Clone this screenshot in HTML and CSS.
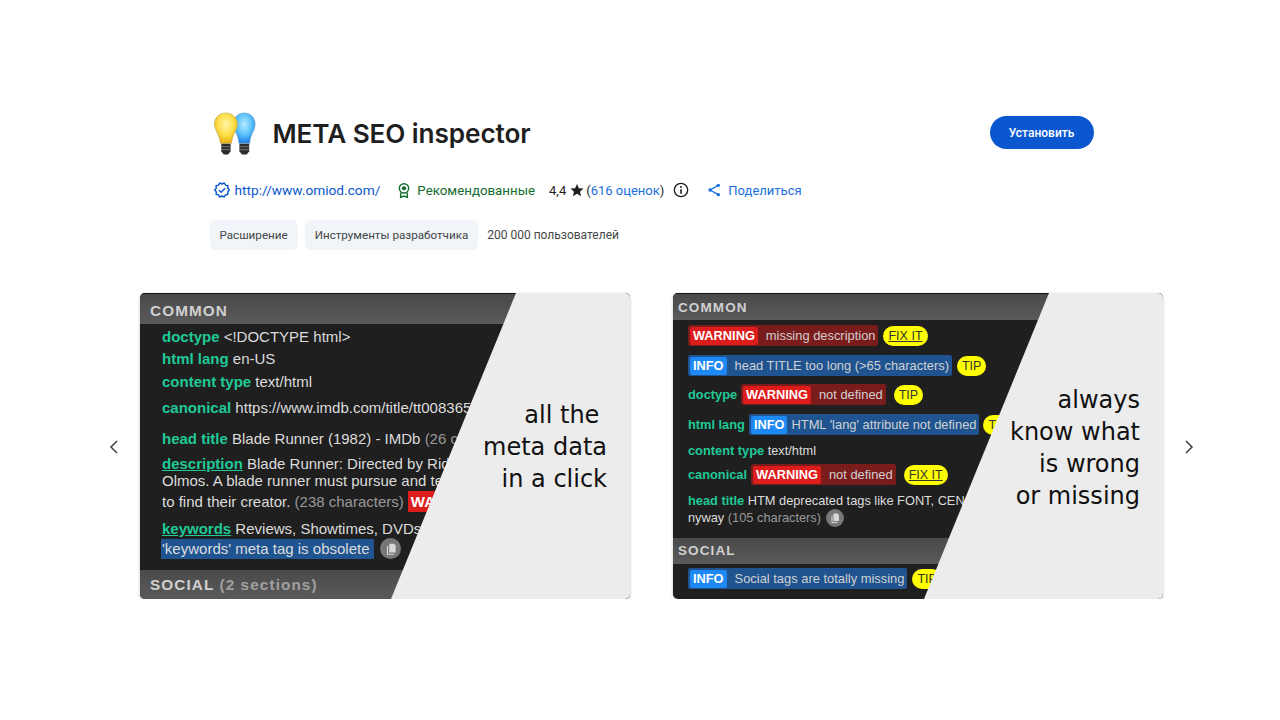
FILE: index.html
```html
<!DOCTYPE html>
<html>
<head>
    <title>META SEO inspector</title>
    <link rel="stylesheet" href="styles.css">
</head>
<body>
    <svg class="defs" width="0" height="0" aria-hidden="true">
        <symbol id="copy-icon" viewBox="0 0 24 24">
            <path d="M9 3h8l3 3v12H9z" fill="#d8d8d8"/>
            <path d="M5 7h2v13h10v2H5z" fill="#d8d8d8"/>
        </symbol>
    </svg>

    <main class="page">
        <header class="top">
            <div class="title-row">
                <div class="brand">
                    <svg class="logo" viewBox="0 0 48 48" width="47" height="47">
                        <defs>
                            <radialGradient id="bulb-yellow" cx="50%" cy="38%" r="62%">
                                <stop offset="0" stop-color="#fff4a8"/>
                                <stop offset="0.55" stop-color="#ffdf4a"/>
                                <stop offset="1" stop-color="#e8b010"/>
                            </radialGradient>
                            <radialGradient id="bulb-blue" cx="50%" cy="38%" r="62%">
                                <stop offset="0" stop-color="#b4ecff"/>
                                <stop offset="0.55" stop-color="#5cc4fb"/>
                                <stop offset="1" stop-color="#1f7fe8"/>
                            </radialGradient>
                        </defs>
                        <path d="M33 2c-6 0-11 4.500-11 11 0 7 5 11 5.500 20h11c.5-9 5.500-13 5.500-20 0-6.500-5-11-11-11z" fill="url(#bulb-blue)" stroke="#6b9db8" stroke-width=".6"/>
                        <path d="M14 2C7.500 2 2.500 7 2.500 13c0 7 5.500 11 6 20h11.500c.5-9 6-13 6-20C26 7 20.500 2 14 2z" fill="url(#bulb-yellow)" stroke="#b5a35a" stroke-width=".6"/>
                        <path d="M9.500 33.500h9.500v7.500l-2.500 3.500h-4.500l-2.500-3.500z" fill="#2b2b2b"/>
                        <path d="M28 33.500h10v7.500l-2.500 3.500h-5l-2.500-3.500z" fill="#2b2b2b"/>
                        <path d="M9.500 36.500h9.500M9.500 39.500h9.500M28 36.500h10M28 39.500h10" stroke="#8a8a8a" stroke-width=".8"/>
                    </svg>
                    <h1>META SEO inspector</h1>
                </div>
                <button class="install">Установить</button>
            </div>

            <div class="meta-row">
                <svg class="icon" viewBox="0 0 24 24" width="16" height="16">
                    <path d="M23 12l-2.440-2.790.340-3.690-3.610-.820-1.890-3.200L12 2.960 8.600 1.500 6.710 4.690 3.100 5.500l.340 3.700L1 12l2.440 2.790-.340 3.700 3.610.820L8.600 22.500l3.400-1.470 3.400 1.460 1.890-3.190 3.610-.820-.340-3.690z" fill="none" stroke="#0b57d0" stroke-width="2.200" stroke-linejoin="round"/>
                    <path d="M7.500 12.300l3.200 3.200 5.900-6" fill="none" stroke="#0b57d0" stroke-width="2.200"/>
                </svg>
                <a class="site-link">http://www.omiod.com/</a>
                <svg class="icon award" viewBox="0 0 24 24" width="16" height="16">
                    <circle cx="12" cy="9.500" r="7" fill="none" stroke="#146c2e" stroke-width="2.200"/>
                    <circle cx="12" cy="9.500" r="3.200" fill="#146c2e"/>
                    <path d="M7 16v7l5-2 5 2v-7" fill="none" stroke="#146c2e" stroke-width="2.200"/>
                </svg>
                <span class="featured">Рекомендованные</span>
                <span class="rating">4,4<svg class="star" viewBox="0 0 24 24" width="14" height="14"><path d="M12 1.500l3.200 7.400 8 .7-6 5.300 1.800 7.900L12 18.600l-7 4.200 1.800-7.900-6-5.300 8-.7z" fill="#1f1f1f"/></svg>(<a class="rating-link">616 оценок</a>)</span>
                <svg class="icon info-icon" viewBox="0 0 24 24" width="16" height="16">
                    <circle cx="12" cy="12" r="10" fill="none" stroke="#1f1f1f" stroke-width="2"/>
                    <path d="M12 11v6.500" stroke="#1f1f1f" stroke-width="2.400"/>
                    <circle cx="12" cy="7.500" r="1.500" fill="#1f1f1f"/>
                </svg>
                <svg class="icon share-icon" viewBox="0 0 24 24" width="16" height="16">
                    <path d="M18.500 5L6 12l12.500 7" fill="none" stroke="#1a6fe0" stroke-width="2"/>
                    <circle cx="18.500" cy="5" r="2.500" fill="#1a6fe0"/>
                    <circle cx="6" cy="12" r="2.500" fill="#1a6fe0"/>
                    <circle cx="18.500" cy="19" r="2.500" fill="#1a6fe0"/>
                </svg>
                <a class="share-link">Поделиться</a>
            </div>

            <div class="chips">
                <span class="chip">Расширение</span>
                <span class="chip">Инструменты разработчика</span>
                <span class="users">200 000 пользователей</span>
            </div>
        </header>

        <section class="gallery">
            <svg class="chevron" viewBox="0 0 10 16" width="10" height="16"><path d="M8 2L2 8l6 6" fill="none" stroke="#3c4043" stroke-width="1.500"/></svg>

            <div class="shots">
                <div class="card card-big">
                    <div class="band">COMMON</div>
                    <div class="rows">
                        <div class="row mt-4"><b>doctype</b> &lt;!DOCTYPE html&gt;</div>
                        <div class="row mt-5"><b>html lang</b> en-US</div>
                        <div class="row mt-6"><b>content type</b> text/html</div>
                        <div class="row mt-9"><b>canonical</b> https://www.imdb.com/title/tt0083658/</div>
                        <div class="row mt-14"><b>head title</b> Blade Runner (1982) - IMDb <i>(26 ch</i></div>
                        <div class="row mt-8"><b class="under">description</b> Blade Runner: Directed by Ridley</div>
                        <div class="row">Olmos. A blade runner must pursue and term</div>
                        <div class="row mt-4">to find their creator. <i>(238 characters)</i><em class="warn-tag">WARNING</em></div>
                        <div class="row mt-10"><b class="under">keywords</b> Reviews, Showtimes, DVDs, Ph</div>
                        <div class="row mt-3">
                            <span class="obsolete">'keywords' meta tag is obsolete</span>
                            <span class="copy"><svg width="14" height="14"><use href="#copy-icon"/></svg></span>
                        </div>
                    </div>
                    <div class="band band-social">SOCIAL <i>(2 sections)</i></div>
                    <div class="wedge">
                        <p class="slogan">all the&nbsp;<br>meta data<br>in a click</p>
                    </div>
                </div>

                <div class="card card-small">
                    <div class="band">COMMON</div>
                    <div class="rows">
                        <div class="row mt-7"><span class="pill warn"><em>WARNING</em>missing description</span><span class="tip fix">FIX IT</span></div>
                        <div class="row mt-13"><span class="pill note"><em>INFO</em>head TITLE too long (&gt;65 characters)</span><span class="tip">TIP</span></div>
                        <div class="row mt-12"><b>doctype</b><span class="pill warn"><em>WARNING</em>not defined</span><span class="tip">TIP</span></div>
                        <div class="row mt-13"><b>html lang</b><span class="pill note tight"><em>INFO</em>HTML 'lang' attribute not defined</span><span class="tip">TIP</span></div>
                        <div class="row mt-9"><b>content type</b> text/html</div>
                        <div class="row mt-7"><b>canonical</b><span class="pill warn"><em>WARNING</em>not defined</span><span class="tip fix">FIX IT</span></div>
                        <div class="row mt-9"><b>head title</b> HTM deprecated tags like FONT, CEN</div>
                        <div class="row">nyway <i>(105 characters)</i><span class="copy"><svg width="12" height="12"><use href="#copy-icon"/></svg></span></div>
                    </div>
                    <div class="band band-social">SOCIAL</div>
                    <div class="rows">
                        <div class="row mt-6"><span class="pill note"><em>INFO</em>Social tags are totally missing</span><span class="tip">TIP</span></div>
                    </div>
                    <div class="wedge">
                        <p class="slogan">always<br>know what<br>is wrong<br>or missing</p>
                    </div>
                </div>
            </div>

            <svg class="chevron" viewBox="0 0 10 16" width="10" height="16"><path d="M2 2l6 6-6 6" fill="none" stroke="#3c4043" stroke-width="1.500"/></svg>
        </section>
    </main>
</body>
</html>
```

FILE: styles.css
```css
body {
    margin: 0;
    background-color: #fff;
    color: #1f1f1f;
    font-family: Roboto, Arial, sans-serif;
}

.defs {
    position: absolute;
}

.page {
    display: flex;
    flex-direction: column;
    align-items: center;
    padding: 108px 0 0 23px;
}

/* header block */
.top {
    width: 884px;
}

.title-row {
    display: flex;
    justify-content: space-between;
    align-items: center;
    height: 48px;
}

.brand {
    display: flex;
    align-items: center;
    gap: 14px;
}

.logo {
    margin: 5px 0 0 2px;
}

h1 {
    margin: 2px 0 0;
    font-family: Inter, Roboto, sans-serif;
    font-size: 26.200px;
    font-weight: 600;
    letter-spacing: -0.1px;
}

.install {
    width: 104px;
    height: 33px;
    margin-top: 1px;
    border: 0;
    border-radius: 17px;
    background-color: #0b57d0;
    color: #fff;
    font-family: Roboto, Arial, sans-serif;
    font-size: 12px;
    font-weight: 500;
}

.meta-row {
    display: flex;
    align-items: center;
    height: 24px;
    margin-top: 22px;
    padding-left: 4px;
    font-size: 13px;
}

.site-link {
    margin-left: 5px;
    color: #0b57d0;
    font-size: 13.700px;
}

.award {
    margin-left: 16px;
}

.featured {
    margin-left: 5px;
    color: #146c2e;
    font-size: 13.300px;
}

.rating {
    display: flex;
    align-items: center;
    margin-left: 14px;
}

.star {
    margin: 0 2px 0 4px;
}

.rating-link {
    color: #1a6fe0;
}

.info-icon {
    margin-left: 9px;
}

.share-icon {
    margin-left: 17px;
}

.share-link {
    margin-left: 6px;
    color: #1a6fe0;
}

.chips {
    display: flex;
    align-items: center;
    margin-top: 18px;
}

.chip {
    height: 30px;
    margin-right: 7px;
    padding: 0 10px;
    border-radius: 6px;
    background-color: #f1f4f9;
    color: #444746;
    font-size: 11.650px;
    line-height: 30px;
}

.users {
    margin-left: 2px;
    color: #444746;
    font-size: 12px;
}

/* screenshots */
.gallery {
    display: flex;
    align-items: center;
    gap: 21px;
    margin-top: 43px;
}

.chevron {
    margin-top: 1px;
}

.shots {
    display: flex;
    gap: 43px;
}

.card {
    position: relative;
    width: 490px;
    height: 306px;
    overflow: hidden;
    border-radius: 5px;
    background-color: #1f1f1f;
    box-shadow: 0 1px 3px rgba(60, 64, 67, 0.3);
    color: #dcdcdc;
    font-family: "Liberation Sans", Arial, sans-serif;
}

.band {
    border-top: 1px solid #111;
    background: linear-gradient(#4a4a4a, #5a5a5a);
    color: #d0d0d0;
    font-weight: bold;
    letter-spacing: 1.100px;
}

.band i {
    color: #a0a0a0;
    font-style: normal;
}

.rows {
    display: flex;
    flex-direction: column;
}

.row {
    display: flex;
    align-items: center;
    height: 17px;
    white-space: pre;
}

.row b {
    color: #20c997;
}

.row i {
    color: #9a9a9a;
    font-style: normal;
}

.row em {
    font-style: normal;
}

.mt-3 { margin-top: 3px; }
.mt-4 { margin-top: 4px; }
.mt-5 { margin-top: 5px; }
.mt-6 { margin-top: 6px; }
.mt-7 { margin-top: 7px; }
.mt-8 { margin-top: 8px; }
.mt-9 { margin-top: 9px; }
.mt-10 { margin-top: 10px; }
.mt-12 { margin-top: 12px; }
.mt-13 { margin-top: 13px; }
.mt-14 { margin-top: 14px; }

.copy {
    display: flex;
    justify-content: center;
    align-items: center;
    border-radius: 50%;
    background-color: #777;
}

/* the big one on the left */
.card-big {
    font-size: 15px;
}

.card-big .band {
    height: 30px;
    padding-left: 10px;
    font-size: 15.300px;
    line-height: 33px;
}

.card-big .rows {
    height: 246px;
    padding-left: 22px;
}

.card-big .band-social {
    height: 29px;
    border-top: 0;
    line-height: 30px;
}

.under {
    text-decoration: underline;
}

.warn-tag {
    margin-left: 4px;
    padding: 2px 3px;
    background-color: #dd1c1c;
    color: #fff;
    font-weight: bold;
}

.obsolete {
    width: 212px;
    margin-left: -1px;
    padding: 1px 0 2px 1px;
    background-color: #1f5490;
}

.card-big .copy {
    width: 21px;
    height: 21px;
    margin-left: 6px;
}

/* the one with badges */
.card-small {
    font-size: 12.800px;
}

.card-small .band {
    height: 26px;
    padding-left: 5px;
    font-size: 13.500px;
    line-height: 28px;
}

.card-small .rows {
    padding-left: 15px;
}

.card-small .rows:nth-of-type(2) {
    height: 218px;
}

.card-small .band-social {
    border-top: 0;
    line-height: 26px;
}

.card-small .copy {
    width: 18px;
    height: 18px;
    margin-left: 5px;
}

.pill {
    display: flex;
    align-items: center;
    gap: 8px;
    height: 21px;
    padding: 0 3px 0 2px;
    border-radius: 2px;
    color: #d0d0d0;
    font-size: 12.900px;
}

.pill em {
    display: block;
    height: 18px;
    padding: 0 3px;
    border-radius: 2px;
    color: #fff;
    font-size: 12.800px;
    font-weight: bold;
    line-height: 18px;
}

.warn {
    background-color: #7b1c1c;
}

.warn em {
    background-color: #dd1c1c;
}

.note {
    background-color: #1f5490;
}

.note em {
    background-color: #1e88f5;
}

.row b + .pill {
    margin-left: 4px;
}

.tight {
    gap: 4px;
}

.tip {
    margin-left: 5px;
    height: 20px;
    padding: 0 5px;
    border-radius: 10px;
    background-color: #ffff00;
    color: #333;
    font-size: 12.500px;
    line-height: 20px;
}

.row b + .pill + .tip {
    margin-left: 8px;
}

.row b + .tight + .tip {
    margin-left: 4px;
}

.fix {
    text-decoration: underline;
}

/* grey diagonal with the big text */
.wedge {
    position: absolute;
    inset: 0;
    background-color: #ececec;
    clip-path: polygon(376px 0, 490px 0, 490px 306px, 251px 306px);
}

.slogan {
    margin: 0;
    padding-right: 23px;
    color: #111;
    font-family: "DejaVu Sans", sans-serif;
    font-size: 24px;
    line-height: 32px;
    text-align: right;
    white-space: nowrap;
}

.card-big .slogan {
    padding-top: 106px;
}

.card-small .slogan {
    padding-top: 91px;
}
```
